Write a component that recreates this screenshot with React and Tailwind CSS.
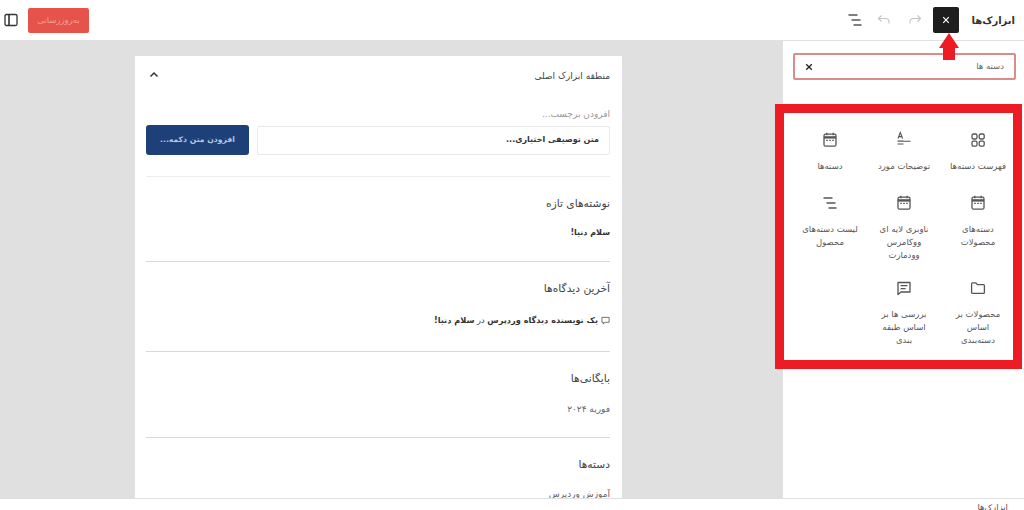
import React from 'react';

const FONT = '"DejaVu Sans", "Noto Sans", sans-serif';

// آیکون‌های نوار بلوک
const CalendarIcon = () => (
  <svg width="16" height="16" viewBox="0 0 16 16" fill="none" stroke="#555" strokeWidth="1.3">
    <rect x="2" y="2.2" width="12" height="12" rx="1.5" />
    <path d="M2 5.4h12" strokeWidth="2.4" />
    <path d="M4.8 0.8v2.4M11.2 0.8v2.4" />
    <path d="M4.2 8.4h1.6M7.2 8.4h1.6M10.2 8.4h1.6" strokeWidth="1.2" />
  </svg>
);

const GridIcon = () => (
  <svg width="16" height="16" viewBox="0 0 16 16" fill="none" stroke="#555" strokeWidth="1.3">
    <rect x="2" y="2" width="5" height="5" rx="1.4" />
    <rect x="9.2" y="2" width="5" height="5" rx="1.4" />
    <rect x="2" y="9.2" width="5" height="5" rx="1.4" />
    <rect x="9.2" y="9.2" width="5" height="5" rx="1.4" />
  </svg>
);

const TermIcon = () => (
  <svg width="20" height="20" viewBox="0 0 20 20" fill="none" stroke="#555" strokeWidth="1.1">
    <path d="M4 8.5 6.3 2.5 8.6 8.5M4.9 6.6h2.8" />
    <path d="M3.5 11h6M3.5 11.2h13M3.5 14h6" />
  </svg>
);

const ListIcon = ({ color = '#555' }) => (
  <svg width="16" height="16" viewBox="0 0 16 16" fill="none" stroke={color} strokeWidth="1.4">
    <path d="M1.5 3h9M4.5 8h9M6.5 13h8" />
  </svg>
);

const FolderIcon = () => (
  <svg width="16" height="16" viewBox="0 0 16 16" fill="none" stroke="#555" strokeWidth="1.3">
    <path d="M1.6 3.8c0-.6.4-1 1-1h3.2l1.6 1.8h6c.6 0 1 .4 1 1v6.8c0 .6-.4 1-1 1H2.6c-.6 0-1-.4-1-1z" />
  </svg>
);

const CommentIcon = () => (
  <svg width="16" height="16" viewBox="0 0 16 16" fill="none" stroke="#555" strokeWidth="1.3">
    <path d="M2 2.5h12v9.5H5l-3 2.5z" strokeLinejoin="round" />
    <path d="M4.6 5.6h6.8M4.6 8.6h5" />
  </svg>
);

const CloseIcon = ({ size = 10, color = '#fff', width = 1.8 }) => (
  <svg width={size} height={size} viewBox="0 0 10 10" stroke={color} strokeWidth={width}>
    <path d="M1.5 1.5l7 7M8.5 1.5l-7 7" />
  </svg>
);

const ArrowIcon = ({ flip }) => (
  <svg width="14" height="12" viewBox="0 0 14 12" fill="none" stroke="#c4c4c4" strokeWidth="1.1" className={flip ? '-scale-x-100' : ''}>
    <path d="M4.5 1.5 1.5 4.5l3 3M1.5 4.5h7c2.4 0 3.5 1.5 3.5 3.5v1.5" />
  </svg>
);

const BLOCKS = [
  { icon: GridIcon, label: 'فهرست دسته‌ها' },
  { icon: TermIcon, label: 'توضیحات مورد' },
  { icon: CalendarIcon, label: 'دسته‌ها' },
  { icon: CalendarIcon, label: 'دسته‌های محصولات' },
  { icon: CalendarIcon, label: 'ناوبری لایه ای ووکامرس وودمارت' },
  { icon: ListIcon, label: 'لیست دسته‌های محصول' },
  { icon: FolderIcon, label: 'محصولات بر اساس دسته‌بندی' },
  { icon: CommentIcon, label: 'بررسی ها بر اساس طبقه بندی' },
];

const BlockItem = ({ icon: Icon, label }) => (
  <div className="flex flex-col items-center">
    <div className="h-5 flex items-center justify-center">
      <Icon />
    </div>
    <p className="mt-[10px] w-[58px] text-center text-[8.5px] leading-[13px] text-[#555]">{label}</p>
  </div>
);

const WidgetSection = ({ title, children, last }) => (
  <div className={`pt-[18px] ${last ? '' : 'border-b border-[#d8d8d8]'}`}>
    <h3 className="text-[10.7px] leading-[18px] text-[#444]">{title}</h3>
    {children}
  </div>
);

export default function App() {
  return (
    <div className="relative h-[510px] w-[1024px] overflow-hidden bg-white flex flex-col" style={{ fontFamily: FONT }}>
      {/* Header */}
      <header className="h-[41px] shrink-0 border-b border-[#e0e0e0] flex items-center justify-between pl-[4px] pr-[9px]">
        <div className="flex items-center">
          <svg width="14" height="14" viewBox="0 0 14 14" fill="none" stroke="#333" strokeWidth="1.3">
            <rect x="1" y="1.5" width="12" height="11" rx="1.5" />
            <path d="M5 1.5v11" strokeWidth="1.6" />
          </svg>
          <button className="ml-[10px] h-[25px] w-[61px] rounded-[2px] bg-[#e5534b] text-[8.5px] text-[#f3a09a]" dir="rtl">به‌روزرسانی</button>
        </div>
        <div className="flex items-center">
          <ListIcon />
          <div className="ml-[14px]"><ArrowIcon /></div>
          <div className="ml-[17px]"><ArrowIcon flip /></div>
          <button className="ml-[11px] h-[26px] w-[26px] rounded-[2px] bg-[#1e1e1e] flex items-center justify-center">
            <CloseIcon size={8} width={1.5} />
          </button>
          <span className="ml-[12px] text-[10px] font-bold text-[#333]" dir="rtl">ابزارک‌ها</span>
        </div>
      </header>

      <div className="flex-1 min-h-0 flex">
        {/* Canvas */}
        <main className="w-[782px] shrink-0 bg-[#e0e0e0] pt-[15px] pl-[135px] overflow-hidden">
          <div className="w-[487px] h-[500px] bg-white pl-[11px] pr-[12px] overflow-hidden" dir="rtl">
            <div className="flex items-center justify-between pt-[4px] h-[37px]">
              <span className="text-[9px] text-[#444]">منطقه ابزارک اصلی</span>
              <svg width="10" height="8" viewBox="0 0 10 8" fill="none" stroke="#333" strokeWidth="1.5" className="ml-[3px] -mt-[4px]">
                <path d="M1.5 5.5 5 2l3.5 3.5" />
              </svg>
            </div>
            <p className="mt-[14px] text-[9px] leading-[14px] text-[#9a9a9a]">افزودن برچسب...</p>
            <div className="mt-[4px] flex items-center gap-[8px]">
              <div className="h-[29px] flex-1 rounded-[2px] border border-[#e8e8e8] flex items-center pr-[10px] text-[8px] font-bold text-[#333]">متن توصیفی اختیاری...</div>
              <button className="h-[30px] w-[103px] rounded-[3px] bg-[#1d4079] text-[7.7px] font-bold text-[#b9c5d9]">افزودن متن دکمه...</button>
            </div>
            <div className="mt-[21px] border-b border-[#ececec]" />

            <WidgetSection title="نوشته‌های تازه">
              <p className="mt-[13px] pb-[21px] text-[8px] leading-[14px] font-bold text-[#333]">سلام دنیا!</p>
            </WidgetSection>
            <WidgetSection title="آخرین دیدگاه‌ها">
              <div className="mt-[15px] pb-[24px] flex items-center gap-[3px] text-[8.2px] leading-[14px] text-[#333]">
                <svg width="9" height="9" viewBox="0 0 10 10" fill="none" stroke="#555" strokeWidth="0.9" className="shrink-0">
                  <path d="M1 1.5h8v5.5H4L2.5 9V7H1z" />
                </svg>
                <span><b>یک نویسنده دیدگاه وردپرس</b> در <b>سلام دنیا!</b></span>
              </div>
            </WidgetSection>
            <WidgetSection title="بایگانی‌ها">
              <p className="mt-[14px] pb-[21px] text-[9px] leading-[14px] text-[#666]">فوریه ۲۰۲۴</p>
            </WidgetSection>
            <WidgetSection title="دسته‌ها" last>
              <p className="mt-[13px] text-[9px] leading-[14px] text-[#666]">آموزش وردپرس</p>
            </WidgetSection>
          </div>
        </main>

        {/* Sidebar */}
        <aside className="w-[242px] shrink-0 border-l border-[#e0e0e0] bg-white pl-[10px] pr-[8px] pt-[12px]" dir="rtl">
          <div className="h-[27px] rounded-[2px] border-2 border-[#dd8a8a] flex items-center justify-between pr-[10px] pl-[10px]">
            <span className="text-[8.5px] text-[#666]">دسته ها</span>
            <CloseIcon size={8} color="#222" width={1.6} />
          </div>
          <div className="mt-[50px] grid grid-cols-[74px_74px_74px] mr-[1px]">
            {BLOCKS.map((b, i) => (
              <div key={i} className={i < 3 ? 'h-[63px]' : i < 6 ? 'h-[85px]' : ''}>
                <BlockItem icon={b.icon} label={b.label} />
              </div>
            ))}
          </div>
        </aside>
      </div>

      {/* Footer */}
      <footer className="h-[12px] shrink-0 border-t border-[#e0e0e0] bg-white relative z-10 pr-[16px] overflow-hidden" dir="rtl">
        <span className="block pt-[2px] text-[8.5px] leading-[12px] text-[#555]">ابزارک‌ها</span>
      </footer>

      {/* Red annotations */}
      <div className="absolute left-[775px] top-[104px] h-[265px] w-[247px] border-[9px] border-[#ed1c24]" />
      <svg className="absolute left-[939px] top-[33px]" width="20" height="27" viewBox="0 0 20 27">
        <path d="M10 0 20 15H16V27H4V15H0z" fill="#ed1c24" />
      </svg>
    </div>
  );
}
